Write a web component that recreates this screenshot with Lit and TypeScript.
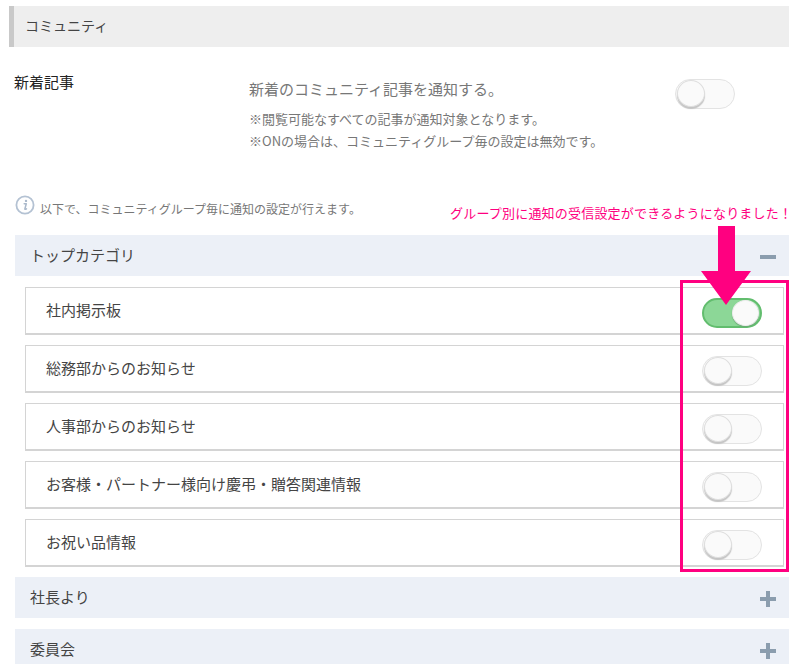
import { LitElement, html, css } from "lit";
import { customElement } from "lit/decorators.js";

const toggle = (on: boolean) => html`<span class="toggle ${on ? "on" : ""}"><span class="knob"></span></span>`;

@customElement("app-root")
export class AppRoot extends LitElement {
  static styles = css`
    :host { display: block; position: relative; width: 800px; height: 664px; overflow: hidden; background: #fff;
      font-family: "Noto Sans CJK JP", "Noto Sans", sans-serif; color: #444; font-size: 15px; }
    .page { padding: 6px 11px 0 9px; display: flex; flex-direction: column; }
    .title { height: 41px; background: #eeeeee; border-left: 5px solid #c9c9c9; padding: 0 0 4px 11px; display: flex; align-items: center; font-size: 14px; color: #444; box-sizing: border-box; }
    .setting { display: flex; padding: 25px 0 0 5px; height: 116px; box-sizing: border-box; }
    .setting .label { width: 235px; font-size: 15px; color: #222; line-height: 20px; }
    .setting .body { width: 426px; color: #777; padding-top: 7px; }
    .setting .main { font-size: 15px; line-height: 20px; margin-bottom: 9px; }
    .setting .note { font-size: 13px; line-height: 22px; }
    .setting .toggle { margin-top: 7px; }
    .info { display: flex; align-items: center; gap: 5px; padding: 25px 0 0 6px; height: 66px; box-sizing: border-box; font-size: 12px; color: #777; }
    .info svg { display: block; margin-top: -8px; }
    .groups { display: flex; flex-direction: column; padding-left: 6px; padding-top: 6px; }
    .acc { height: 41px; background: #ecf0f7; display: flex; align-items: center; justify-content: space-between; padding: 0 13px 2px 15px; font-size: 15px; color: #444; flex: none; box-sizing: border-box; }
    .acc + .acc { margin-top: 11px; }
    .acc svg { display: block; margin-top: 4px; }
    .rows { display: flex; flex-direction: column; gap: 10px; padding: 11px 5px 10px 10px; }
    .row { height: 48px; box-sizing: border-box; border: 1px solid #d4d4d4; border-bottom-width: 2px; padding: 0 21px 2px 20px; display: flex; align-items: center; justify-content: space-between; color: #444; }
    .row .toggle { margin-top: 6px; }
    .toggle { position: relative; display: block; width: 60px; height: 30px; box-sizing: border-box; border-radius: 15px; border: 1px solid #e3e3e3; background: #fafafa; flex: none; }
    .knob { position: absolute; left: 1px; top: 0; width: 28px; height: 27px; border-radius: 50%; background: #fafafa; border: 1px solid #dedede; box-sizing: border-box; box-shadow: 0 2px 1px #c4c4c4; }
    .toggle.on { background: #8cd797; border: 2px solid #62bd6e; }
    .toggle.on .knob { left: 28px; top: 0; width: 27px; height: 26px; border-color: #eee; box-shadow: 0 1px 1px #6aa874; }
    .mark { position: absolute; left: 450px; top: 204px; font-size: 13px; line-height: 18px; color: #ff0080; white-space: nowrap; letter-spacing: 0.2px; }
    .box { position: absolute; left: 680px; top: 280px; width: 109px; height: 292px; box-sizing: border-box; border: 3px solid #ff0080; pointer-events: none; }
    .arrow { position: absolute; left: 701px; top: 226px; display: block; }
  `;

  render() {
    const rows = ["社内掲示板", "総務部からのお知らせ", "人事部からのお知らせ", "お客様・パートナー様向け慶弔・贈答関連情報", "お祝い品情報"];
    return html`
      <div class="page">
        <div class="title">コミュニティ</div>
        <div class="setting">
          <div class="label">新着記事</div>
          <div class="body">
            <div class="main">新着のコミュニティ記事を通知する。</div>
            <div class="note">※閲覧可能なすべての記事が通知対象となります。</div>
            <div class="note">※ONの場合は、コミュニティグループ毎の設定は無効です。</div>
          </div>
          ${toggle(false)}
        </div>
        <div class="info">
          <svg width="20" height="20" viewBox="0 0 20 20" fill="none">
            <circle cx="10" cy="10" r="8.6" stroke="#b4c2d3" stroke-width="1.8"/>
            <circle cx="11" cy="5.9" r="1.2" fill="#aab9cb"/>
            <path d="M9.2 8.8h2.1L9.9 13.8c-.2.7.4.8 1.6 0" stroke="#aab9cb" stroke-width="1.5" stroke-linecap="round" stroke-linejoin="round"/>
          </svg>
          <span>以下で、コミュニティグループ毎に通知の設定が行えます。</span>
        </div>
        <div class="groups">
          <div class="acc"><span>トップカテゴリ</span>
            <svg width="16" height="16" viewBox="0 0 16 16"><rect x="0" y="6" width="16" height="4" fill="#8b9dae"/></svg>
          </div>
          <div class="rows">
            ${rows.map((r, i) => html`<div class="row"><span>${r}</span>${toggle(i === 0)}</div>`)}
          </div>
          <div class="acc"><span>社長より</span>
            <svg width="16" height="16" viewBox="0 0 16 16"><path d="M6 0h4v6h6v4h-6v6H6v-6H0V6h6z" fill="#8b9dae"/></svg>
          </div>
          <div class="acc"><span>委員会</span>
            <svg width="16" height="16" viewBox="0 0 16 16"><path d="M6 0h4v6h6v4h-6v6H6v-6H0V6h6z" fill="#8b9dae"/></svg>
          </div>
        </div>
      </div>
      <div class="mark">グループ別に通知の受信設定ができるようになりました！</div>
      <div class="box"></div>
      <svg class="arrow" width="50" height="80" viewBox="0 0 50 80">
        <path d="M17 0h17v45h16L25 79 0 45h17z" fill="#ff0080"/>
      </svg>
    `;
  }
}
